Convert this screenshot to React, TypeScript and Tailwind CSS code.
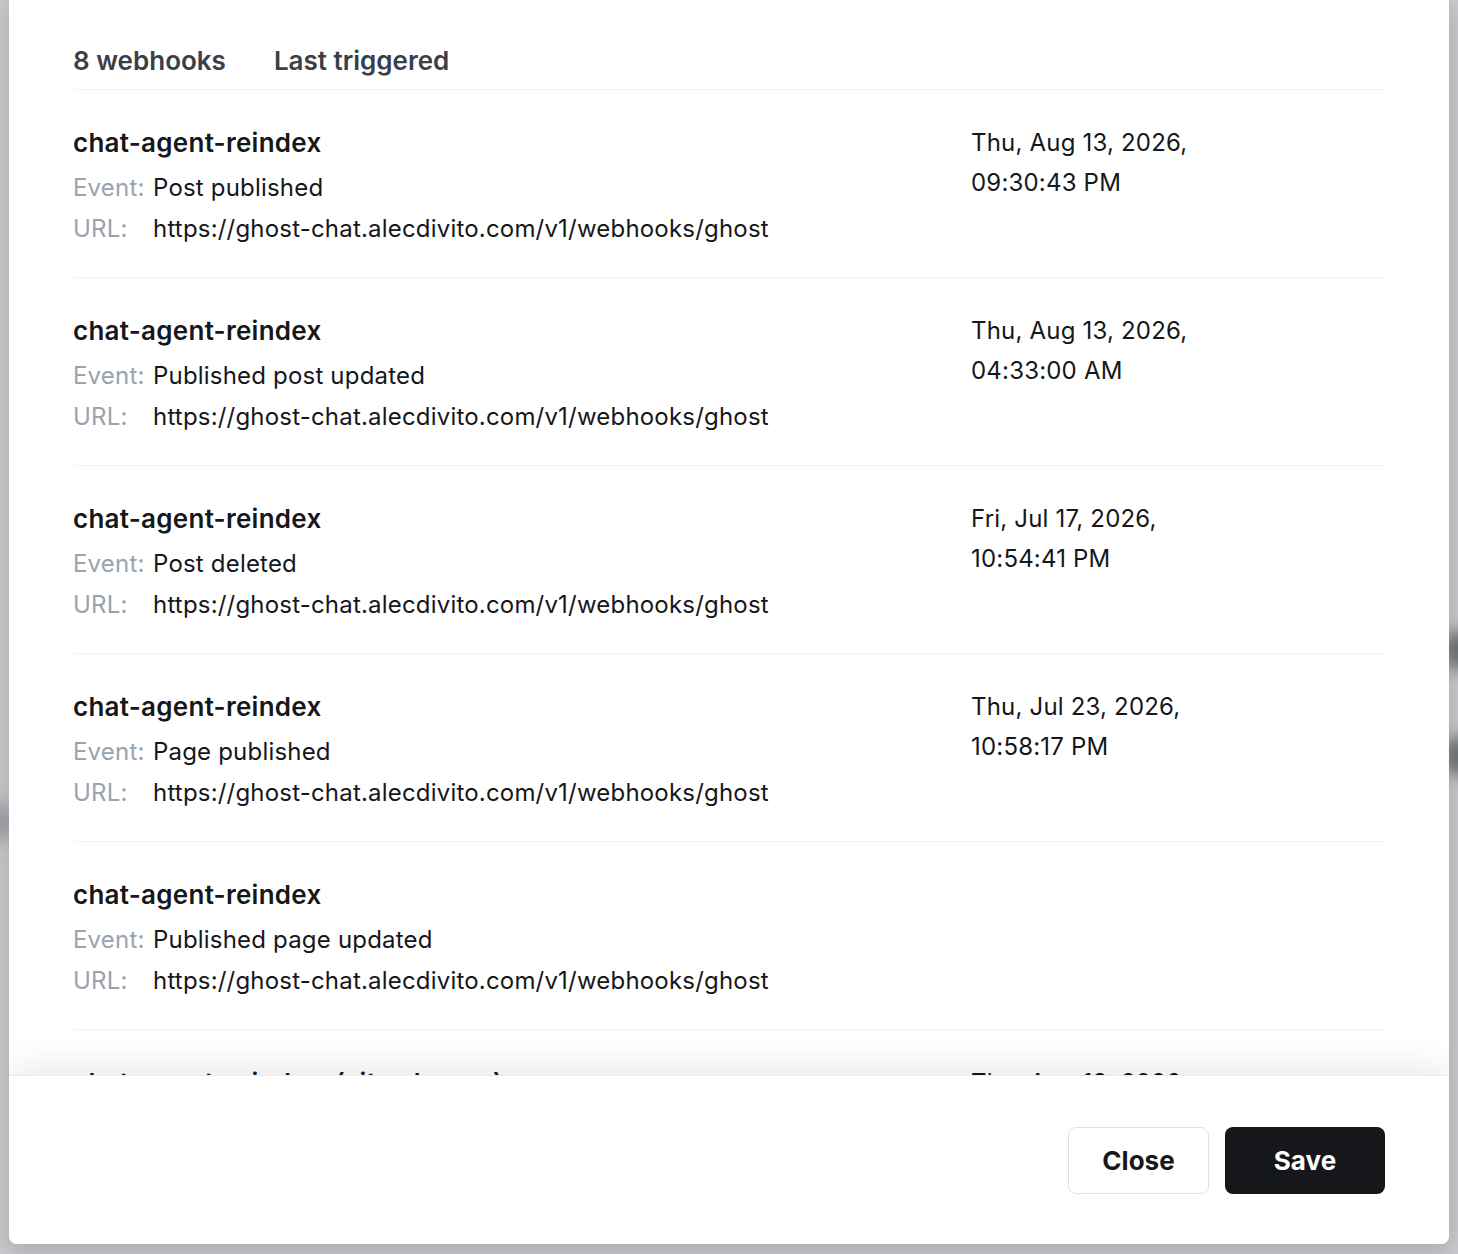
import React from "react";

type Webhook = {
  name: string;
  event: string;
  url: string;
  date?: [string, string];
};

const URL = "https://ghost-chat.alecdivito.com/v1/webhooks/ghost";

const webhooks: Webhook[] = [
  { name: "chat-agent-reindex", event: "Post published", url: URL, date: ["Thu, Aug 13, 2026,", "09:30:43 PM"] },
  { name: "chat-agent-reindex", event: "Published post updated", url: URL, date: ["Thu, Aug 13, 2026,", "04:33:00 AM"] },
  { name: "chat-agent-reindex", event: "Post deleted", url: URL, date: ["Fri, Jul 17, 2026,", "10:54:41 PM"] },
  { name: "chat-agent-reindex", event: "Page published", url: URL, date: ["Thu, Jul 23, 2026,", "10:58:17 PM"] },
  { name: "chat-agent-reindex", event: "Published page updated", url: URL },
  { name: "chat-agent-reindex  (site change)", event: "Site changed", url: URL, date: ["Thu, Aug 13, 2026,", "09:30:43 PM"] },
];

function WebhookRow({ hook }: { hook: Webhook }) {
  return (
    <div className="grid grid-cols-[898px_1fr] border-b border-[#f1f3f4] pt-8 pb-[28px]">
      <div>
        <div className="whitespace-pre pt-[2px] text-[26px] leading-[38px] font-semibold tracking-[0.01em] text-[#15171a]">
          {hook.name}
        </div>
        <div className="mt-[6px] flex text-[24px] leading-[40px] tracking-[0.008em]">
          <span className="w-[80px] text-[#97a3af]">Event:</span>
          <span className="text-[#15171a]">{hook.event}</span>
        </div>
        <div className="mt-px flex text-[24px] leading-[40px] tracking-[0.008em]">
          <span className="w-[80px] text-[#97a3af]">URL:</span>
          <span className="text-[#15171a]">{hook.url}</span>
        </div>
      </div>
      <div className="pt-px text-[24px] leading-[40px] tracking-[0.008em] text-[#15171a]">
        {hook.date && (
          <>
            <div>{hook.date[0]}</div>
            <div>{hook.date[1]}</div>
          </>
        )}
      </div>
    </div>
  );
}

export default function App() {
  return (
    <div
      className="relative h-[1254px] w-[1458px] overflow-hidden bg-[#c9cacd]"
      style={{ fontFamily: "Inter, 'Noto Sans', sans-serif" }}
    >
      {/* blurred page content behind the backdrop */}
      <div className="absolute left-[1442px] top-[630px] h-[40px] w-[50px] rounded-full bg-[#6f7276] blur-[8px]" />
      <div className="absolute left-[1442px] top-[736px] h-[40px] w-[50px] rounded-full bg-[#6f7276] blur-[8px]" />
      <div className="absolute left-[-30px] top-[802px] h-[40px] w-[44px] rounded-full bg-[#9da0a5] blur-[8px]" />

      <div className="relative ml-[9px] flex h-[1244px] w-[1440px] flex-col overflow-hidden rounded-b-[8px] bg-white shadow-[0_6px_24px_rgba(0,0,0,0.18)]">
        <div className="flex-1 overflow-hidden px-16 pt-[45px]">
          <div className="flex gap-12 border-b border-[#f1f3f4] pb-[12px] text-[26px] leading-[32px] font-semibold text-[#394047]">
            <span>8 webhooks</span>
            <span>Last triggered</span>
          </div>
          {webhooks.map((hook, i) => (
            <WebhookRow key={i} hook={hook} />
          ))}
        </div>

        <div className="relative z-10 flex h-[169px] shrink-0 items-center justify-end gap-4 border-t border-[#ececec] bg-white px-16 shadow-[0_-10px_30px_rgba(0,0,0,0.08)]">
          <button className="h-[67px] w-[141px] rounded-[8px] border border-[#dfe3e6] bg-white text-[26px] font-bold text-[#15171a]">
            Close
          </button>
          <button className="h-[67px] w-[160px] rounded-[8px] bg-[#15171a] text-[26px] font-bold text-white">
            Save
          </button>
        </div>
      </div>
    </div>
  );
}
